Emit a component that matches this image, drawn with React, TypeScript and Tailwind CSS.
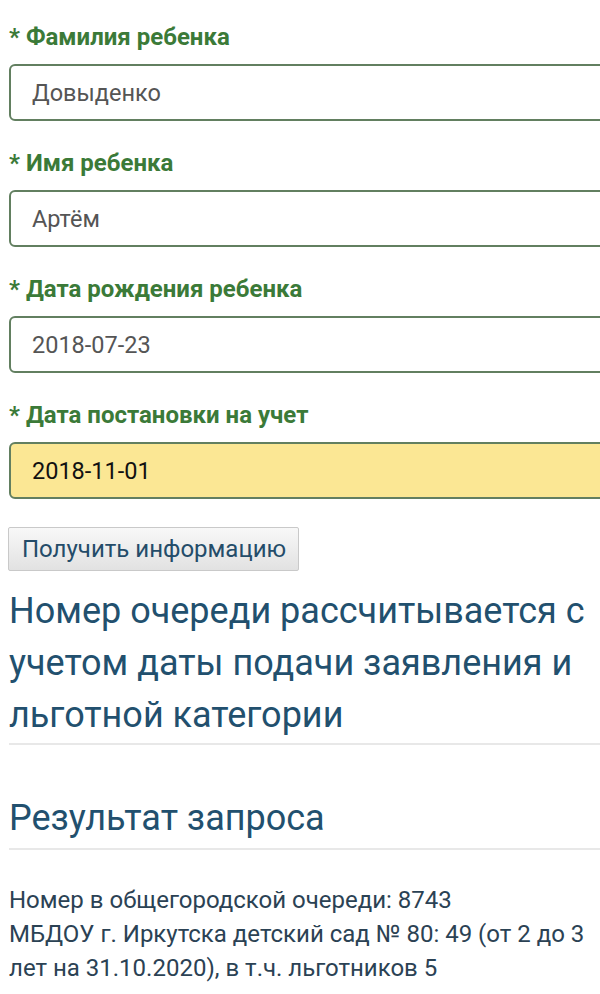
import { useState } from 'react';

const fields = [
  { label: 'Фамилия ребенка', value: 'Довыденко' },
  { label: 'Имя ребенка', value: 'Артём' },
  { label: 'Дата рождения ребенка', value: '2018-07-23' },
  { label: 'Дата постановки на учет', value: '2018-11-01', focused: true },
];

export default function App() {
  const [values, setValues] = useState(fields.map(f => f.value));

  return (
    <div className="w-[600px] h-[994px] overflow-hidden bg-white font-['Roboto',sans-serif]">
      <div className="pl-[9px] pt-[22px]">
        {fields.map((f, i) => (
          <div key={f.label} className="mb-[27px]">
            <label className="block text-[24px] leading-[30px] font-bold text-[#3b7a38] mb-[12px]">
              * {f.label}
            </label>
            <input
              value={values[i]}
              onChange={e => setValues(values.map((v, j) => (j === i ? e.target.value : v)))}
              className={`block w-[640px] h-[57px] rounded-[6px] border-2 border-[#627f60] px-[21px] text-[23.5px] outline-none ${
                f.focused ? 'bg-[#fbe794] text-[#111]' : 'bg-white text-[#555]'
              }`}
            />
          </div>
        ))}

        <button className="mt-[1px] -ml-px h-[44px] w-[291px] border border-[#c9c9c9] bg-gradient-to-b from-[#f8f8f8] to-[#e2e2e2] text-[24px] text-[#244c69] rounded-[2px] text-left pl-[13px]">
          Получить информацию
        </button>

        <h2 className="mt-[14px] text-[36px] leading-[52px] text-[#22506e] pb-[2px] border-b-2 border-[#e8e8e8]">
          Номер очереди рассчитывается с учетом даты подачи заявления и льготной категории
        </h2>

        <h2 className="mt-[47px] text-[36px] leading-[52px] text-[#22506e] pb-[4px] border-b-2 border-[#e8e8e8]">
          Результат запроса
        </h2>

        <p className="mt-[33px] text-[24px] leading-[34px] text-[#2b4254]">
          Номер в общегородской очереди: 8743
          <br />
          МБДОУ г. Иркутска детский сад № 80: 49 (от 2 до 3 лет на 31.10.2020), в т.ч. льготников 5
        </p>
      </div>
    </div>
  );
}
